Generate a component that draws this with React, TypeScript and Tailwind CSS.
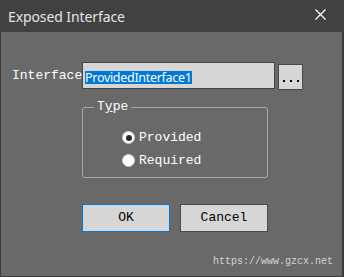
import React from 'react';

function Radio({ label, checked }: { label: string; checked?: boolean }) {
  return (
    <div className="flex items-center h-[23px]">
      <span className="w-[13px] h-[13px] rounded-full bg-white border border-[#cfcfcf] flex items-center justify-center">
        {checked && <span className="w-[6px] h-[6px] rounded-full bg-[#2a2a2a]" />}
      </span>
      <span className="ml-[4px] text-[13px] text-white">{label}</span>
    </div>
  );
}

export default function App() {
  return (
    <div className="w-[344px] h-[277px] flex flex-col bg-[#696969] font-['Liberation_Mono',monospace] overflow-hidden">
      {/* Title bar */}
      <div className="h-[32px] shrink-0 bg-[#414141] flex items-center justify-between pl-[8px] pr-[18px]">
        <span className="font-['Noto_Sans',sans-serif] text-[14px] text-[#e4e4e4] tracking-[-0.1px]">Exposed Interface</span>
        <svg width="11" height="11" viewBox="0 0 11 11" className="text-white -mt-[4px]">
          <path d="M0.5 0.5L10.5 10.5M10.5 0.5L0.5 10.5" stroke="currentColor" strokeWidth="1.2" />
        </svg>
      </div>

      {/* Body */}
      <div className="flex-1 flex flex-col border-l border-r-2 border-b border-[#3c3c3c] pt-[30px]">
        <div className="flex items-start">
          <div className="w-[81px] pl-[11px] h-[27px] flex items-center overflow-hidden whitespace-nowrap">
            <span className="text-[13px] text-white">Interface</span>
          </div>
          <div className="w-[193px] h-[27px] bg-[#d6d6d6] border border-[#454545] pl-[2px] pt-[3px]">
            <span className="bg-[#0078d7] text-white text-[12.5px] leading-[13px] inline-block h-[13px] font-['Noto_Sans',sans-serif] tracking-[-0.3px]">
              ProvidedInterface1
            </span>
          </div>
          <div className="ml-[3px] mt-[2px] w-[25px] h-[26px] bg-[#d6d6d6] border border-[#4a4a4a] flex items-end justify-center pb-[7px] gap-[5px]">
            <span className="w-[2px] h-[2px] bg-black" />
            <span className="w-[2px] h-[2px] bg-black" />
            <span className="w-[2px] h-[2px] bg-black" />
          </div>
        </div>

        <fieldset className="ml-[81px] mt-[10px] w-[186px] h-[78px] border border-[#a9a9a9] rounded-[3px] pl-[10px] pt-[12px]">
          <legend className="ml-[1px] px-[3px] text-[13px] text-white leading-[14px]">
            T<span className="underline">y</span>pe
          </legend>
          <div className="pl-[29px]">
            <Radio label="Provided" checked />
            <Radio label="Required" />
          </div>
        </fieldset>

        <div className="flex gap-[10px] ml-[81px] mt-[26px]">
          <button className="w-[88px] h-[28px] bg-[#d6d6d6] border border-[#0078d7] text-[13px] text-black">OK</button>
          <button className="w-[88px] h-[28px] bg-[#d6d6d6] border border-[#4b4b4b] text-[13px] text-black">Cancel</button>
        </div>

        <div className="flex justify-end pr-[9px] mt-[22px]">
          <span className="text-[10px] text-[#d4d4d4]">https://www.gzcx.net</span>
        </div>
      </div>
    </div>
  );
}
